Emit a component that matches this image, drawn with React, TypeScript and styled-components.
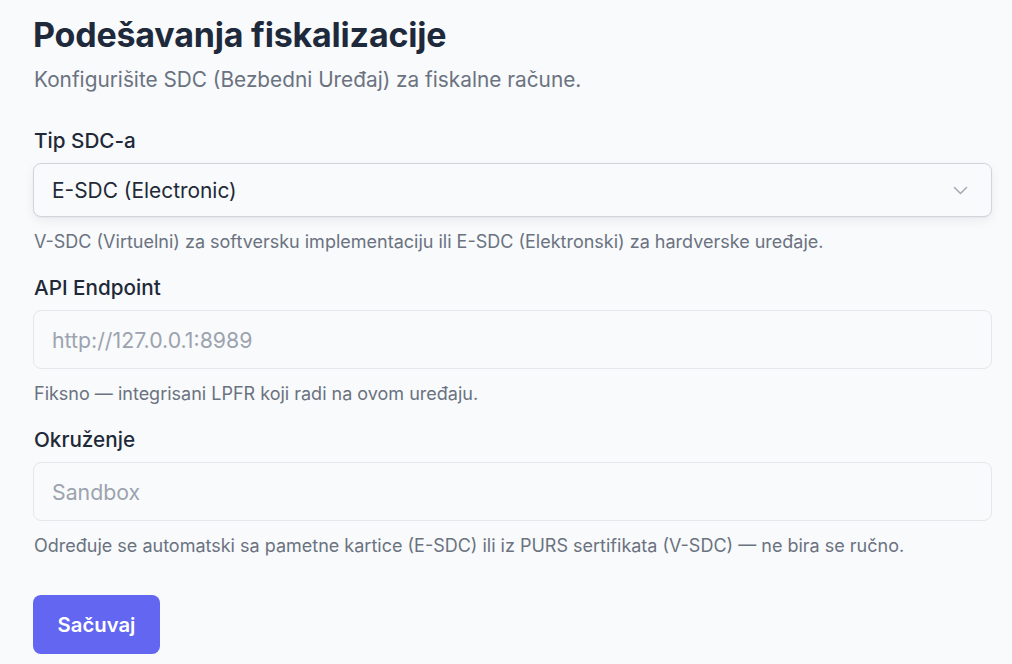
import React from "react";
import styled, { createGlobalStyle } from "styled-components";

const Global = createGlobalStyle`
  html, body { margin: 0; padding: 0; background: #f8fafc; }
  body { font-family: Inter, "Noto Sans", sans-serif; -webkit-font-smoothing: antialiased; }
  * { box-sizing: border-box; }
`;

const Page = styled.div`
  min-height: 664px;
  background: #f8fafc;
  padding: 14px 20px 0 33px;
`;

const Title = styled.h1`
  margin: 0;
  font-size: 34px;
  line-height: 42px;
  font-weight: 700;
  color: #1e293b;
  letter-spacing: -0.2px;
`;

const Subtitle = styled.p`
  margin: 10px 0 0 1px;
  font-size: 20.8px;
  line-height: 28px;
  color: #6b7280;
`;

const Form = styled.div`
  margin-top: 33px;
  display: flex;
  flex-direction: column;
`;

const Field = styled.div`
  display: flex;
  flex-direction: column;
  margin-bottom: 22px;
`;

const Label = styled.label`
  font-size: 20.7px;
  line-height: 28px;
  font-weight: 500;
  color: #1f2937;
  margin: 0 0 8px 1px;
`;

const SelectBox = styled.div`
  height: 54px;
  border: 1px solid #d1d5db;
  border-radius: 8px;
  background: #f9fafb;
  box-shadow: 0 4px 12px rgba(15, 23, 42, 0.06), 0 1px 2px rgba(15, 23, 42, 0.04);
  display: flex;
  align-items: center;
  justify-content: space-between;
  padding: 0 23px 0 18px;
  font-size: 20.9px;
  color: #1f2937;
`;

const Input = styled.div`
  height: 59px;
  border: 1px solid #e5e7eb;
  border-radius: 8px;
  background: #f9fafb;
  display: flex;
  align-items: center;
  padding: 0 18px;
  font-size: 21.3px;
  color: #9ca3af;
`;

const Help = styled.p`
  margin: 15px 0 0 1px;
  font-size: 18px;
  line-height: 20px;
  color: #6b7280;
`;

const Button = styled.button`
  align-self: flex-start;
  margin-top: 17px;
  width: 127px;
  height: 59px;
  border: none;
  border-radius: 8px;
  background: #6366f1;
  color: #ffffff;
  font-family: inherit;
  font-size: 20.3px;
  font-weight: 600;
  cursor: pointer;
`;

const Chevron = () => (
  <svg width="15" height="9" viewBox="0 0 15 9" fill="none" stroke="#a3a9b4" strokeWidth="1.5" strokeLinecap="round" strokeLinejoin="round">
    <path d="M1.5 1.5l6 6 6-6" />
  </svg>
);

export default function App() {
  return (
    <>
      <Global />
      <Page>
        <Title>Podešavanja fiskalizacije</Title>
        <Subtitle>Konfigurišite SDC (Bezbedni Uređaj) za fiskalne račune.</Subtitle>
        <Form>
          <Field>
            <Label>Tip SDC-a</Label>
            <SelectBox>
              <span>E-SDC (Electronic)</span>
              <Chevron />
            </SelectBox>
            <Help>V-SDC (Virtuelni) za softversku implementaciju ili E-SDC (Elektronski) za hardverske uređaje.</Help>
          </Field>
          <Field>
            <Label>API Endpoint</Label>
            <Input>http://127.0.0.1:8989</Input>
            <Help>Fiksno — integrisani LPFR koji radi na ovom uređaju.</Help>
          </Field>
          <Field>
            <Label>Okruženje</Label>
            <Input>Sandbox</Input>
            <Help>Određuje se automatski sa pametne kartice (E-SDC) ili iz PURS sertifikata (V-SDC) — ne bira se ručno.</Help>
          </Field>
          <Button>Sačuvaj</Button>
        </Form>
      </Page>
    </>
  );
}
